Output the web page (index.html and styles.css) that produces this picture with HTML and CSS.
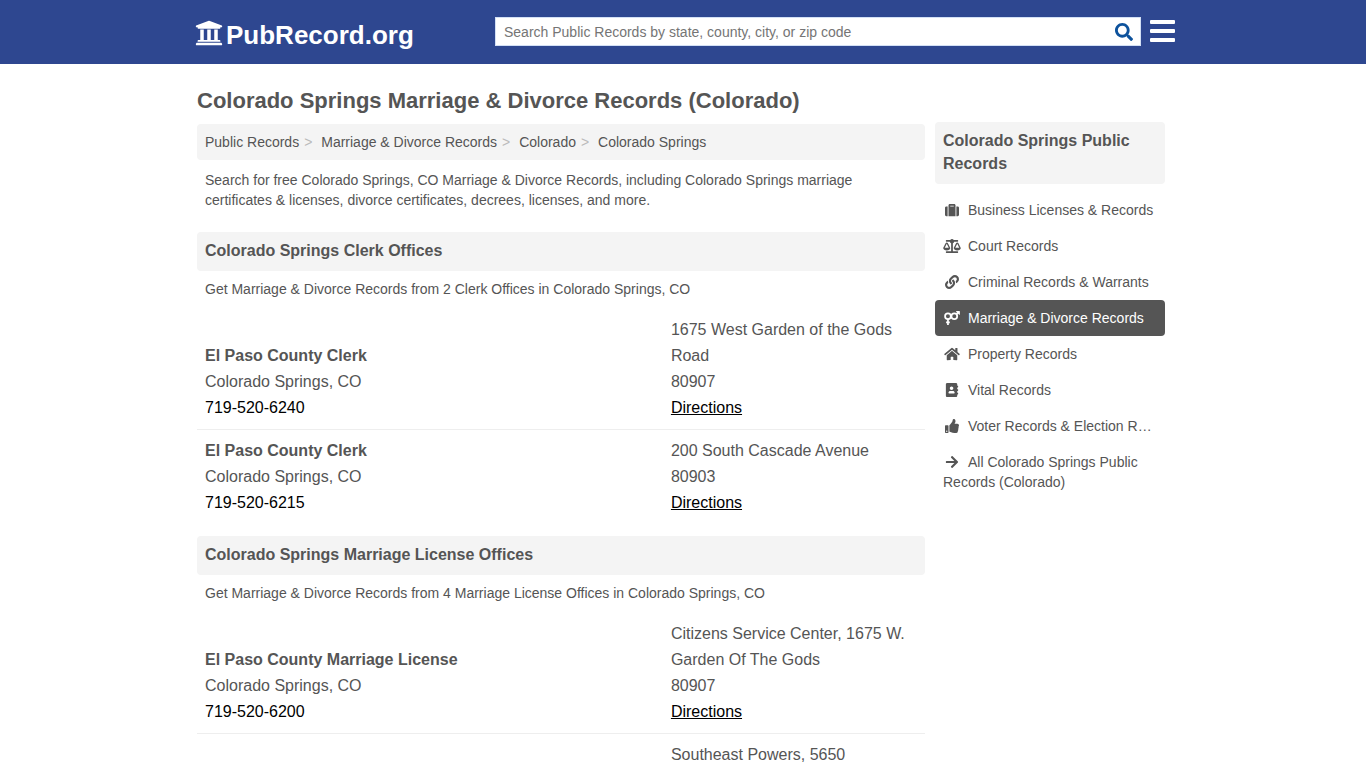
FILE: index.html
```html
<!DOCTYPE html>
<html lang="en">
<head>
<meta charset="utf-8">
<meta name="viewport" content="width=device-width, initial-scale=1">
<title>Colorado Springs Marriage &amp; Divorce Records (Colorado)</title>
<link rel="stylesheet" href="styles.css">
</head>
<body>
<header class="site-header">
  <div class="header-row">
    <a class="logo" href="#">
      <svg class="logo-icon" viewBox="0 0 512 512" aria-hidden="true"><path d="M496 128v16a8 8 0 0 1-8 8h-24v12c0 6.627-5.373 12-12 12H60c-6.627 0-12-5.373-12-12v-12H24a8 8 0 0 1-8-8v-16a8 8 0 0 1 4.941-7.392l232-88a7.996 7.996 0 0 1 6.118 0l232 88A8 8 0 0 1 496 128zm-24 304H40c-13.255 0-24 10.745-24 24v16a8 8 0 0 0 8 8h464a8 8 0 0 0 8-8v-16c0-13.255-10.745-24-24-24zM96 192v192H60c-6.627 0-12 5.373-12 12v20h416v-20c0-6.627-5.373-12-12-12h-36V192h-64v192h-64V192h-64v192h-64V192H96z"/></svg>
      <span>PubRecord.org</span>
    </a>
    <form class="search" role="search">
      <input class="search-input" type="text" aria-label="Search public records" placeholder="Search Public Records by state, county, city, or zip code">
      <button class="search-button" type="button" aria-label="Search"><svg viewBox="0 0 512 512" aria-hidden="true"><path d="M505 442.700L405.300 343c-4.500-4.500-10.600-7-17-7H372c27.600-35.300 44-79.700 44-128C416 93.100 322.900 0 208 0S0 93.100 0 208s93.100 208 208 208c48.300 0 92.700-16.400 128-44v16.300c0 6.400 2.500 12.500 7 17l99.700 99.700c9.400 9.400 24.600 9.400 33.900 0l28.300-28.300c9.400-9.400 9.400-24.600.1-34zM208 336c-70.700 0-128-57.200-128-128 0-70.700 57.200-128 128-128 70.700 0 128 57.200 128 128 0 70.700-57.200 128-128 128z"/></svg></button>
    </form>
    <button class="menu-button" type="button" aria-label="Menu"><span class="bar"></span><span class="bar"></span><span class="bar"></span></button>
  </div>
</header>

<div class="page">
  <main class="content">
    <h1 class="title">Colorado Springs Marriage &amp; Divorce Records (Colorado)</h1>
    <nav class="breadcrumb" aria-label="Breadcrumb">
      <a href="#">Public Records</a><span class="sep">&gt;</span>
      <a href="#">Marriage &amp; Divorce Records</a><span class="sep">&gt;</span>
      <a href="#">Colorado</a><span class="sep">&gt;</span>
      <a href="#">Colorado Springs</a>
    </nav>
    <p class="intro">Search for free Colorado Springs, CO Marriage &amp; Divorce Records, including Colorado Springs marriage certificates &amp; licenses, divorce certificates, decrees, licenses, and more.</p>

    <section class="offices">
      <h2 class="panel-title">Colorado Springs Clerk Offices</h2>
      <p class="note">Get Marriage &amp; Divorce Records from 2 Clerk Offices in Colorado Springs, CO</p>
      <table class="listing">
        <tr>
          <td class="office"><strong>El Paso County Clerk</strong><br>Colorado Springs, CO<br><a class="phone" href="#">719-520-6240</a></td>
          <td>1675 West Garden of the Gods Road<br>80907<br><a class="directions" href="#">Directions</a></td>
        </tr>
        <tr>
          <td class="office"><strong>El Paso County Clerk</strong><br>Colorado Springs, CO<br><a class="phone" href="#">719-520-6215</a></td>
          <td>200 South Cascade Avenue<br>80903<br><a class="directions" href="#">Directions</a></td>
        </tr>
      </table>
    </section>

    <section class="offices">
      <h2 class="panel-title">Colorado Springs Marriage License Offices</h2>
      <p class="note">Get Marriage &amp; Divorce Records from 4 Marriage License Offices in Colorado Springs, CO</p>
      <table class="listing">
        <tr>
          <td class="office"><strong>El Paso County Marriage License</strong><br>Colorado Springs, CO<br><a class="phone" href="#">719-520-6200</a></td>
          <td>Citizens Service Center, 1675 W. Garden Of The Gods<br>80907<br><a class="directions" href="#">Directions</a></td>
        </tr>
        <tr>
          <td class="office"></td>
          <td>Southeast Powers, 5650</td>
        </tr>
      </table>
    </section>
  </main>

  <aside class="sidebar">
    <h2 class="panel-title">Colorado Springs Public Records</h2>
    <nav class="side-nav" aria-label="Colorado Springs Public Records">
      <a class="side-link" href="#"><svg class="icon" viewBox="0 0 512 512" aria-hidden="true"><path d="M128 480h256V80c0-26.500-21.500-48-48-48H176c-26.500 0-48 21.500-48 48v400zm64-384h128v32H192V96zm320 80v256c0 26.500-21.500 48-48 48h-48V128h48c26.500 0 48 21.500 48 48zM96 480H48c-26.500 0-48-21.500-48-48V176c0-26.500 21.500-48 48-48h48v352z"/></svg>Business Licenses &amp; Records</a>
      <a class="side-link" href="#"><svg class="icon" viewBox="0 0 640 512" aria-hidden="true"><path d="M256 336h-.02c0-16.180 1.340-8.730-85.050-181.510-17.650-35.290-68.190-35.360-85.870 0C-2.060 328.750.02 320.330.02 336H0c0 44.180 57.310 80 128 80s128-35.820 128-80zM128 176l72 144H56l72-144zm511.980 160c0-16.180 1.340-8.730-85.050-181.510-17.650-35.290-68.190-35.360-85.870 0-87.120 174.260-85.040 165.840-85.040 181.510H384c0 44.180 57.310 80 128 80s128-35.820 128-80h-.02zM440 320l72-144 72 144H440zm88 128H352V153.250c23.510-10.290 41.160-31.480 46.390-57.250H528c8.840 0 16-7.160 16-16V48c0-8.840-7.160-16-16-16H383.640C369.040 12.680 346.090 0 320 0s-49.040 12.680-63.640 32H112c-8.840 0-16 7.160-16 16v32c0 8.840 7.160 16 16 16h129.610c5.230 25.760 22.870 46.960 46.390 57.250V448H112c-8.840 0-16 7.160-16 16v32c0 8.840 7.160 16 16 16h416c8.840 0 16-7.160 16-16v-32c0-8.840-7.160-16-16-16z"/></svg>Court Records</a>
      <a class="side-link" href="#"><svg class="icon" viewBox="0 0 512 512" aria-hidden="true"><path d="M326.612 185.391c59.747 59.809 58.927 155.698.36 214.590-.11.12-.24.25-.36.37l-67.200 67.200c-59.270 59.270-155.699 59.262-214.960 0-59.270-59.260-59.270-155.700 0-214.960l37.106-37.106c9.840-9.840 26.786-3.300 27.294 10.606.648 17.722 3.826 35.527 9.690 52.721 1.986 5.822.567 12.262-3.783 16.612l-13.087 13.087c-28.026 28.026-28.905 73.660-1.155 101.960 28.024 28.579 74.086 28.749 102.325.51l67.200-67.190c28.191-28.191 28.073-73.757 0-101.830-3.701-3.694-7.429-6.564-10.341-8.569a16.037 16.037 0 0 1-6.947-12.606c-.396-10.567 3.348-21.456 11.698-29.806l21.054-21.055c5.521-5.521 14.182-6.199 20.584-1.731a152.482 152.482 0 0 1 20.522 17.197zM467.547 44.449c-59.261-59.262-155.690-59.270-214.960 0l-67.200 67.200c-.12.12-.25.25-.36.37-58.566 58.892-59.387 154.781.36 214.590a152.454 152.454 0 0 0 20.521 17.196c6.402 4.468 15.064 3.789 20.584-1.731l21.054-21.055c8.350-8.350 12.094-19.239 11.698-29.806a16.037 16.037 0 0 0-6.947-12.606c-2.912-2.005-6.640-4.875-10.341-8.569-28.073-28.073-28.191-73.639 0-101.830l67.200-67.190c28.239-28.239 74.300-28.069 102.325.51 27.750 28.300 26.872 73.934-1.155 101.960l-13.087 13.087c-4.350 4.350-5.769 10.790-3.783 16.612 5.864 17.194 9.042 34.999 9.690 52.721.509 13.906 17.454 20.446 27.294 10.606l37.106-37.106c59.271-59.259 59.271-155.699.001-214.959z"/></svg>Criminal Records &amp; Warrants</a>
      <a class="side-link active" href="#" aria-current="page"><svg class="icon" viewBox="0 0 576 512" aria-hidden="true"><g fill="none" stroke="currentColor" stroke-width="64"><circle cx="140" cy="190" r="106"/><circle cx="372" cy="190" r="106"/><path d="M140 296v216M72 420h136M446 116l84-72"/></g><path d="M452 0h106c10 0 18 8 18 18v106c0 14-16 20-26 10L442 28c-10-12-4-28 10-28z"/></svg>Marriage &amp; Divorce Records</a>
      <a class="side-link" href="#"><svg class="icon" viewBox="0 0 576 512" aria-hidden="true"><path d="M280.370 148.260L96 300.110V464a16 16 0 0 0 16 16l112.060-.29a16 16 0 0 0 15.920-16V368a16 16 0 0 1 16-16h64a16 16 0 0 1 16 16v95.640a16 16 0 0 0 16 16.050L464 480a16 16 0 0 0 16-16V300L295.670 148.260a12.190 12.190 0 0 0-15.300 0zM571.600 251.470L488 182.560V44.050a12 12 0 0 0-12-12h-56a12 12 0 0 0-12 12v72.610L318.470 43a48 48 0 0 0-61 0L4.340 251.470a12 12 0 0 0-1.600 16.900l25.500 31A12 12 0 0 0 45.150 301l235.220-193.740a12.190 12.190 0 0 1 15.300 0L530.900 301a12 12 0 0 0 16.900-1.600l25.500-31a12 12 0 0 0-1.700-16.930z"/></svg>Property Records</a>
      <a class="side-link" href="#"><svg class="icon" viewBox="0 0 448 512" aria-hidden="true"><path d="M436 160c6.600 0 12-5.400 12-12v-40c0-6.600-5.400-12-12-12h-20V48c0-26.500-21.500-48-48-48H48C21.500 0 0 21.500 0 48v416c0 26.500 21.500 48 48 48h320c26.500 0 48-21.500 48-48v-48h20c6.600 0 12-5.400 12-12v-40c0-6.600-5.400-12-12-12h-20v-64h20c6.600 0 12-5.400 12-12v-40c0-6.600-5.400-12-12-12h-20v-64h20zm-228-32c35.300 0 64 28.700 64 64s-28.700 64-64 64-64-28.700-64-64 28.700-64 64-64zm112 236.800c0 10.600-10 19.200-22.400 19.200H118.400C106 384 96 375.400 96 364.800v-19.200c0-31.800 30.100-57.600 67.200-57.600h5c12.300 5.100 25.700 8 39.800 8s27.600-2.900 39.800-8h5c37.100 0 67.200 25.800 67.200 57.600v19.200z"/></svg>Vital Records</a>
      <a class="side-link" href="#"><svg class="icon" viewBox="0 0 512 512" aria-hidden="true"><path d="M104 224H24c-13.255 0-24 10.745-24 24v240c0 13.255 10.745 24 24 24h80c13.255 0 24-10.745 24-24V248c0-13.255-10.745-24-24-24zM64 472c-13.255 0-24-10.745-24-24s10.745-24 24-24 24 10.745 24 24-10.745 24-24 24zM384 81.452c0 42.416-25.970 66.208-33.277 94.548h101.723c33.397 0 59.397 27.746 59.553 58.098.084 17.938-7.546 37.249-19.439 49.197l-.11.11c9.836 23.337 8.237 56.037-9.308 79.469 8.681 25.895-.069 57.704-16.382 74.757 4.298 17.598 2.244 32.575-6.148 44.632C440.202 511.587 389.616 512 346.839 512l-2.845-.001c-48.287-.017-87.806-17.598-119.560-31.725-15.957-7.099-36.821-15.887-52.651-16.178-6.540-.120-11.783-5.457-11.783-11.998v-213.770c0-3.200 1.282-6.271 3.558-8.521 39.614-39.144 56.648-80.587 89.117-113.111 14.804-14.832 20.188-37.236 25.393-58.902C282.515 39.293 291.817 0 312 0c24 0 72 8 72 81.452z"/></svg>Voter Records &amp; Election R…</a>
      <a class="side-link" href="#"><svg class="icon" viewBox="0 0 448 512" aria-hidden="true"><path d="M190.500 66.900l22.200-22.200c9.400-9.400 24.600-9.400 33.900 0L441 239c9.400 9.400 9.400 24.600 0 33.900L246.600 467.300c-9.400 9.400-24.600 9.400-33.900 0l-22.200-22.200c-9.500-9.500-9.300-25 .4-34.300L311.400 296H24c-13.300 0-24-10.700-24-24v-32c0-13.300 10.700-24 24-24h287.400L190.900 101.200c-9.800-9.300-10-24.800-.4-34.300z"/></svg>All Colorado Springs Public Records (Colorado)</a>
    </nav>
  </aside>
</div>
</body>
</html>
```
FILE: styles.css
```css
* { box-sizing: border-box; }

body {
  margin: 0;
  background: #fff;
  color: #555;
  font: 14px/20px "Liberation Sans", Arial, sans-serif;
}

a { color: inherit; text-decoration: none; }
h1, h2, p { margin: 0; }
button { border: 0; padding: 0; cursor: pointer; }

.site-header { background: #2e4790; }

.header-row {
  display: flex;
  align-items: center;
  max-width: 984px;
  min-height: 64px;
  margin: 0 auto;
  padding: 0 0 2px 4px;
}

.logo {
  display: flex;
  align-items: center;
  flex: 0 0 300px;
  gap: 3px;
  color: #fff;
  font-size: 26px;
  font-weight: bold;
  line-height: 32px;
  padding-top: 7px;
}

.logo-icon { width: 28px; height: 28px; margin-bottom: 4px; fill: currentColor; }

.search {
  display: flex;
  flex: 1;
  height: 29px;
  background: #fff;
  border: 1px solid #d3e0f5;
}

.search-input {
  flex: 1;
  min-width: 0;
  border: 0;
  padding: 1px 8px 0;
  background: transparent;
  color: #555;
  font: inherit;
}

.search-input::placeholder { color: #757575; opacity: 1; }

.search-button {
  display: flex;
  align-items: center;
  justify-content: center;
  width: 32px;
  padding-top: 2px;
  background: transparent;
}

.search-button svg { width: 18px; height: 18px; fill: #0d529c; }

.menu-button {
  display: flex;
  flex-direction: column;
  gap: 5px;
  width: 25px;
  margin-left: 9px;
  background: transparent;
}

.bar { height: 4px; width: 100%; background: #fff; border-radius: 1px; }

.page {
  display: flex;
  gap: 10px;
  align-items: flex-start;
  max-width: 976px;
  margin: 0 auto;
  padding: 0 6px 0 2px;
}

.content { flex: 1; min-width: 0; padding-top: 24px; }

.title { font-size: 22px; line-height: 26px; margin-bottom: 10px; }

.breadcrumb {
  padding: 8px;
  background: #f4f4f4;
  border-radius: 4px;
}

.sep { color: #bbb; padding: 0 5px; }

.intro { padding: 10px 64px 0 8px; }

.offices { margin-top: 22px; }
.offices + .offices { margin-top: 12px; }

.panel-title {
  padding: 7px 8px 9px;
  background: #f4f4f4;
  border-radius: 4px;
  font-size: 16px;
  line-height: 23px;
}

.note { padding: 8px 8px 10px; }

.listing {
  width: 100%;
  table-layout: fixed;
  border-collapse: collapse;
  font-size: 16px;
  line-height: 26px;
}

.listing td { padding: 8px; vertical-align: bottom; }
.listing .office { width: 64%; }
.listing tr + tr td { border-top: 1px solid #eee; }

.phone, .directions { color: #000; }
.directions { text-decoration: underline; }

.sidebar { flex: 0 0 230px; min-width: 0; padding-top: 58px; }

.side-nav { margin-top: 8px; }

.side-link {
  display: block;
  padding: 8px;
  border-radius: 4px;
}

.side-link.active { background: #555; color: #fff; }

.icon {
  width: 18px;
  height: 14px;
  margin-right: 7px;
  vertical-align: -2px;
  fill: currentColor;
}
```
